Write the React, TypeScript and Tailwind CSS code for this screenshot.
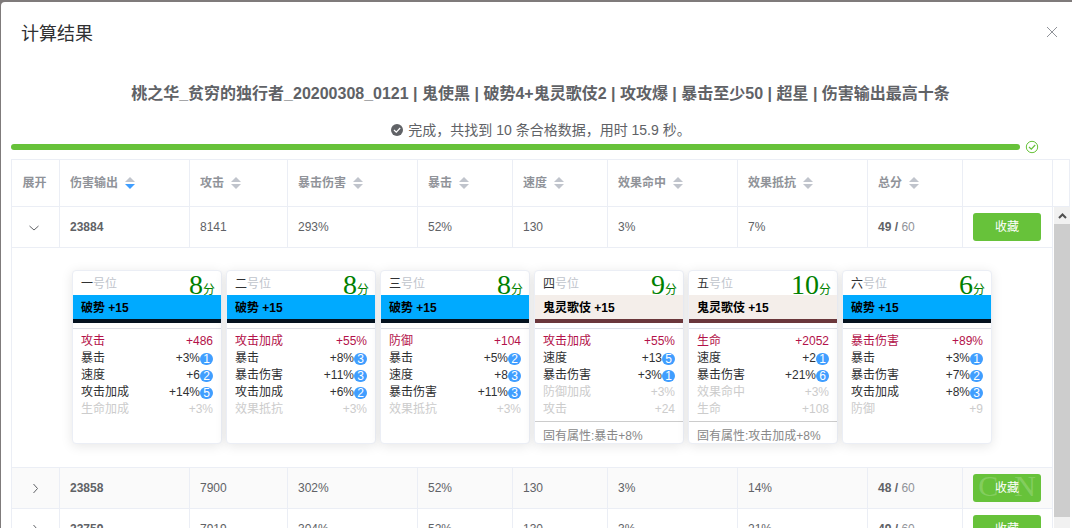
import { Fragment, useState } from "react";
import clsx from "clsx";

type Attr = {
  name: string;
  value: string;
  hits?: number;
};

type Mitama = {
  position: string;
  score: number;
  suit: "破势" | "鬼灵歌伎";
  main: Attr;
  subs: Attr[];
  inherent?: string;
};

type Result = {
  damage: string;
  attack: string;
  critDamage: string;
  crit: string;
  speed: string;
  hit: string;
  resist: string;
  score: number;
  mitamas: Mitama[];
};

const firstSet: Mitama[] = [
  {
    position: "一",
    score: 8,
    suit: "破势",
    main: { name: "攻击", value: "+486" },
    subs: [
      { name: "暴击", value: "+3%", hits: 1 },
      { name: "速度", value: "+6", hits: 2 },
      { name: "攻击加成", value: "+14%", hits: 5 },
      { name: "生命加成", value: "+3%" },
    ],
  },
  {
    position: "二",
    score: 8,
    suit: "破势",
    main: { name: "攻击加成", value: "+55%" },
    subs: [
      { name: "暴击", value: "+8%", hits: 3 },
      { name: "暴击伤害", value: "+11%", hits: 3 },
      { name: "攻击加成", value: "+6%", hits: 2 },
      { name: "效果抵抗", value: "+3%" },
    ],
  },
  {
    position: "三",
    score: 8,
    suit: "破势",
    main: { name: "防御", value: "+104" },
    subs: [
      { name: "暴击", value: "+5%", hits: 2 },
      { name: "速度", value: "+8", hits: 3 },
      { name: "暴击伤害", value: "+11%", hits: 3 },
      { name: "效果抵抗", value: "+3%" },
    ],
  },
  {
    position: "四",
    score: 9,
    suit: "鬼灵歌伎",
    main: { name: "攻击加成", value: "+55%" },
    subs: [
      { name: "速度", value: "+13", hits: 5 },
      { name: "暴击伤害", value: "+3%", hits: 1 },
      { name: "防御加成", value: "+3%" },
      { name: "攻击", value: "+24" },
    ],
    inherent: "暴击+8%",
  },
  {
    position: "五",
    score: 10,
    suit: "鬼灵歌伎",
    main: { name: "生命", value: "+2052" },
    subs: [
      { name: "速度", value: "+2", hits: 1 },
      { name: "暴击伤害", value: "+21%", hits: 6 },
      { name: "效果命中", value: "+3%" },
      { name: "生命", value: "+108" },
    ],
    inherent: "攻击加成+8%",
  },
  {
    position: "六",
    score: 6,
    suit: "破势",
    main: { name: "暴击伤害", value: "+89%" },
    subs: [
      { name: "暴击", value: "+3%", hits: 1 },
      { name: "暴击伤害", value: "+7%", hits: 2 },
      { name: "攻击加成", value: "+8%", hits: 3 },
      { name: "防御", value: "+9" },
    ],
  },
];

const results: Result[] = [
  { damage: "23884", attack: "8141", critDamage: "293%", crit: "52%", speed: "130", hit: "3%", resist: "7%", score: 49, mitamas: firstSet },
  { damage: "23858", attack: "7900", critDamage: "302%", crit: "52%", speed: "130", hit: "3%", resist: "14%", score: 48, mitamas: firstSet },
  { damage: "23759", attack: "7919", critDamage: "304%", crit: "52%", speed: "130", hit: "3%", resist: "21%", score: 49, mitamas: firstSet },
];

const columns = ["伤害输出", "攻击", "暴击伤害", "暴击", "速度", "效果命中", "效果抵抗", "总分"];

const suitClass = {
  破势: "bg-[#00aaff] border-[#04121f]",
  鬼灵歌伎: "bg-[#f4eeea] border-[#6b373b]",
};

const cell = "border-r border-b border-[#ebeef5] px-[10px] text-left";

function SortCaret({ active }: { active?: boolean }) {
  return (
    <svg width="10" height="12" viewBox="0 0 10 12" aria-hidden="true">
      <path d="M5 0L10 5H0z" fill="#c0c4cc" />
      <path d="M5 12L0 7H10z" fill={active ? "#409eff" : "#c0c4cc"} />
    </svg>
  );
}

function Chevron({ open }: { open: boolean }) {
  return (
    <svg width="12" height="12" viewBox="0 0 12 12" fill="none" stroke="#606266" aria-hidden="true">
      <path d={open ? "M1.5 5L6 9L10.5 5" : "M5.5 2L9.5 6.5L5.5 11"} />
    </svg>
  );
}

function MitamaCard({ mitama }: { mitama: Mitama }) {
  return (
    <article className="flex h-[174px] w-[150px] flex-none flex-col overflow-hidden rounded border border-[#ebeef5] bg-white text-[#303133] shadow-[0_2px_12px_rgba(0,0,0,0.1)]">
      <header className="flex h-6 flex-none justify-between pr-1.5 pl-2 leading-[26px]">
        <span>
          {mitama.position}
          <span className="text-[#c0c4cc]">号位</span>
        </span>
        <span className="leading-7 text-[green]">
          <span className="font-['Liberation_Serif',serif] text-[28px]">{mitama.score}</span>分
        </span>
      </header>
      <h3 className={clsx("relative h-7 flex-none border-b-4 pl-2 leading-[26px] font-bold text-black", suitClass[mitama.suit])}>
        {mitama.suit} +15
      </h3>
      <ul className="mt-[5px] flex-1 border-t border-[#dcdfe6] px-2 pt-1 leading-[17px]">
        <li className="flex justify-between text-[#b3124a]">
          <span>{mitama.main.name}</span>
          <span>{mitama.main.value}</span>
        </li>
        {mitama.subs.map((sub) => (
          <li key={sub.name} className={clsx("flex justify-between", !sub.hits && "text-[#cccccc]")}>
            <span>{sub.name}</span>
            <span className="flex items-center">
              {sub.value}
              {sub.hits && <b className="h-3 w-[13px] rounded-full bg-[#409eff] text-center leading-3 font-normal text-white">{sub.hits}</b>}
            </span>
          </li>
        ))}
      </ul>
      {mitama.inherent && (
        <footer className="h-[22px] border-t border-[#cccccc] pl-2 leading-[29px] text-[#888888]">固有属性:{mitama.inherent}</footer>
      )}
    </article>
  );
}

export default function App() {
  const [expanded, setExpanded] = useState<string | null>("23884");

  return (
    <div className="h-screen overflow-hidden bg-[#7f7b7b] pt-0.5 pl-px font-['Liberation_Sans','Noto_Sans_CJK_SC',sans-serif] text-xs text-[#606266]">
      <main className="relative flex h-full flex-col overflow-hidden rounded-tl-sm bg-white pr-0.5 pl-[10px]">
        <header className="flex flex-none items-start justify-between pt-5 pr-3 pl-[10px]">
          <h1 className="text-lg leading-6 text-[#303133]">计算结果</h1>
          <button type="button" aria-label="关闭" className="mt-1">
            <svg width="12" height="12" viewBox="0 0 12 12" stroke="#909399" aria-hidden="true">
              <path d="M1 1L11 11M11 1L1 11" />
            </svg>
          </button>
        </header>

        <h2 className="mt-9 flex-none text-center text-base leading-6 font-bold">
          桃之华_贫穷的独行者_20200308_0121 | 鬼使黑 | 破势4+鬼灵歌伎2 | 攻攻爆 | 暴击至少50 | 超星 | 伤害输出最高十条
        </h2>
        <p className="mt-3.5 flex flex-none items-center justify-center gap-1 text-sm leading-5">
          <svg width="14" height="14" viewBox="0 0 14 14" aria-hidden="true">
            <circle cx="7" cy="7" r="6" fill="#606266" />
            <path d="M4 7L6.3 9.2L10.2 5" fill="none" stroke="#fff" strokeWidth="1.2" />
          </svg>
          完成，共找到 10 条合格数据，用时 15.9 秒。
        </p>

        {/* Progress */}
        <div className="flex flex-none items-center gap-[5px] pr-[31px]">
          <div role="progressbar" aria-valuenow={100} aria-label="计算进度" className="h-1.5 flex-1 rounded-full bg-[#67c23a]" />
          <svg width="14" height="14" viewBox="0 0 14 14" fill="none" stroke="#67c23a" aria-hidden="true">
            <circle cx="7" cy="7" r="5.7" />
            <path d="M4 7L6.3 9.2L10.2 5" strokeWidth="1.2" />
          </svg>
        </div>

        {/* Results */}
        <div className="mt-[5px] flex min-h-0 flex-1 items-stretch overflow-hidden border-t border-l border-[#ebeef5]">
          <div className="min-w-0 flex-1 overflow-hidden">
            <table className="w-full table-fixed border-separate border-spacing-0">
              <colgroup>
                <col className="w-[48px]" />
                <col className="w-[130px]" />
                <col className="w-[98px]" />
                <col className="w-[130px]" />
                <col className="w-[95px]" />
                <col className="w-[95px]" />
                <col className="w-[130px]" />
                <col className="w-[130px]" />
                <col className="w-[95px]" />
                <col className="w-[90px]" />
              </colgroup>
              <thead>
                <tr className="h-[47px] text-[#909399]">
                  <th className="border-r border-b border-[#ebeef5] pr-0.5 text-center">展开</th>
                  {columns.map((column, index) => (
                    <th key={column} className={cell}>
                      <button type="button" className="flex items-center gap-[7px]">
                        {column}
                        <SortCaret active={index === 0} />
                      </button>
                    </th>
                  ))}
                  <td className={cell} />
                </tr>
              </thead>
              <tbody>
                {results.map((row, index) => {
                  const open = expanded === row.damage;
                  return (
                    <Fragment key={row.damage}>
                      <tr className={clsx("h-[41px]", index % 2 === 1 && "bg-[#fafafa]")}>
                        <td className="border-r border-b border-[#ebeef5] pr-[3px]">
                          <button
                            type="button"
                            aria-label="展开"
                            aria-expanded={open}
                            className="mx-auto block"
                            onClick={() => setExpanded(open ? null : row.damage)}
                          >
                            <Chevron open={open} />
                          </button>
                        </td>
                        <td className={clsx(cell, "font-bold")}>{row.damage}</td>
                        <td className={cell}>{row.attack}</td>
                        <td className={cell}>{row.critDamage}</td>
                        <td className={cell}>{row.crit}</td>
                        <td className={cell}>{row.speed}</td>
                        <td className={cell}>{row.hit}</td>
                        <td className={cell}>{row.resist}</td>
                        <td className={cell}>
                          <b>{row.score} /</b> <span className="text-[#909399]">60</span>
                        </td>
                        <td className={cell}>
                          <button type="button" className="block h-7 w-[68px] rounded-[3px] bg-[#67c23a] text-white">
                            收藏
                          </button>
                        </td>
                      </tr>
                      {open && (
                        <tr>
                          <td colSpan={10} className="border-r border-b border-[#ebeef5] px-[60px] pt-[22px] pb-[23px]">
                            <div className="flex gap-1">
                              {row.mitamas.map((mitama) => (
                                <MitamaCard key={mitama.position} mitama={mitama} />
                              ))}
                            </div>
                          </td>
                        </tr>
                      )}
                    </Fragment>
                  );
                })}
              </tbody>
            </table>
          </div>

          {/* Scrollbar */}
          <div className="flex w-[17px] flex-none flex-col">
            <div className="h-[47px] flex-none border-r border-b border-[#ebeef5]" />
            <div className="ml-px flex-1 bg-[#f1f1f1]">
              <div className="flex h-[17px] items-center justify-center">
                <svg width="9" height="6" viewBox="0 0 9 6" fill="none" stroke="#505050" strokeWidth="2" aria-hidden="true">
                  <path d="M1 5L4.5 1.5L8 5" />
                </svg>
              </div>
              <div className="h-[293px] bg-[#cdcdcd]" />
            </div>
          </div>
        </div>

        {/* Watermark */}
        <div aria-hidden="true" className="pointer-events-none absolute right-9 bottom-6 flex gap-4 font-['Liberation_Serif',serif] text-3xl text-white/20">
          <span>C</span>
          <span>N</span>
        </div>
      </main>
    </div>
  );
}
